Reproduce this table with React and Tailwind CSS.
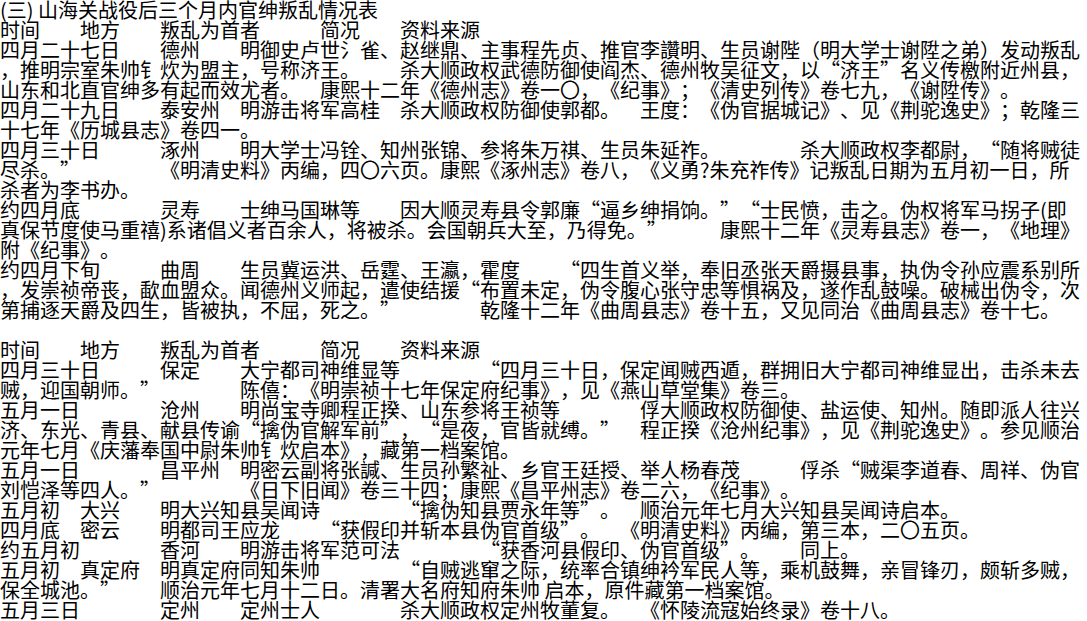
import React from "react";

const cellWidth = (s) =>
  [...s].reduce((a, c) => a + (c.charCodeAt(0) < 0x2000 ? 0.35 : 1), 0);

const build = (segs) => {
  let out = "";
  let pos = 0;
  segs.forEach(([col, text]) => {
    if (col > 0) {
      const n = Math.max(1, col - Math.floor(pos));
      out += "\t".repeat(n);
      pos = col;
    }
    out += text;
    pos += cellWidth(text);
  });
  return out;
};

const header = [
  [0, "时间"],
  [4, "地方"],
  [8, "叛乱为首者"],
  [16, "简况"],
  [20, "资料来源"],
];

const rows = [
  [[0, "(三) 山海关战役后三个月内官绅叛乱情况表"]],
  header,
  [
    [0, "四月二十七日"],
    [8, "德州"],
    [12, "明御史卢世氵雀、赵继鼎、主事程先贞、推官李讚明、生员谢陛（明大学士谢陞之弟）发动叛乱"],
  ],
  [
    [0, "，推明宗室朱帅钅炊为盟主，号称济王。"],
    [20, "杀大顺政权武德防御使阎杰、德州牧吴征文，以“济王”名义传檄附近州县，"],
  ],
  [
    [0, "山东和北直官绅多有起而效尤者。"],
    [16, "康熙十二年《德州志》卷一〇，《纪事》；《清史列传》卷七九，《谢陞传》。"],
  ],
  [
    [0, "四月二十九日"],
    [8, "泰安州"],
    [12, "明游击将军高桂"],
    [20, "杀大顺政权防御使郭都。"],
    [32, "王度：《伪官据城记》、见《荆驼逸史》；乾隆三"],
  ],
  [[0, "十七年《历城县志》卷四一。"]],
  [
    [0, "四月三十日"],
    [8, "涿州"],
    [12, "明大学士冯铨、知州张锦、参将朱万祺、生员朱延祚。"],
    [40, "杀大顺政权李都尉，“随将贼徒"],
  ],
  [
    [0, "尽杀。”"],
    [8, "《明清史料》丙编，四〇六页。康熙《涿州志》卷八，《义勇?朱充祚传》记叛乱日期为五月初一日，所"],
  ],
  [[0, "杀者为李书办。"]],
  [
    [0, "约四月底"],
    [8, "灵寿"],
    [12, "士绅马国琳等"],
    [20, "因大顺灵寿县令郭廉“逼乡绅捐饷。”“士民愤，击之。伪权将军马拐子(即"],
  ],
  [
    [0, "真保节度使马重禧)系诸倡义者百余人，将被杀。会国朝兵大至，乃得免。”"],
    [36, "康熙十二年《灵寿县志》卷一，《地理》"],
  ],
  [[0, "附《纪事》。"]],
  [
    [0, "约四月下旬"],
    [8, "曲周"],
    [12, "生员冀运洪、岳霆、王瀛，霍度"],
    [28, "“四生首义举，奉旧丞张天爵摄县事，执伪令孙应震系别所"],
  ],
  [[0, "，发崇祯帝丧，歃血盟众。闻德州义师起，遣使结援“布置未定，伪令腹心张守忠等惧祸及，遂作乱鼓噪。破械出伪令，次"]],
  [
    [0, "第捕逐天爵及四生，皆被执，不屈，死之。”"],
    [24, "乾隆十二年《曲周县志》卷十五，又见同治《曲周县志》卷十七。"],
  ],
  null,
  header,
  [
    [0, "四月三十日"],
    [8, "保定"],
    [12, "大宁都司神维显等"],
    [24, "“四月三十日，保定闻贼西遁，群拥旧大宁都司神维显出，击杀未去"],
  ],
  [
    [0, "贼，迎国朝师。”"],
    [12, "陈僖：《明崇祯十七年保定府纪事》，见《燕山草堂集》卷三。"],
  ],
  [
    [0, "五月一日"],
    [8, "沧州"],
    [12, "明尚宝寺卿程正揆、山东参将王祯等"],
    [32, "俘大顺政权防御使、盐运使、知州。随即派人往兴"],
  ],
  [
    [0, "济、东光、青县、献县传谕“擒伪官解军前”，“是夜，官皆就缚。”"],
    [32, "程正揆《沧州纪事》，见《荆驼逸史》。参见顺治"],
  ],
  [[0, "元年七月《庆藩奉国中尉朱帅钅炊启本》，藏第一档案馆。"]],
  [
    [0, "五月一日"],
    [8, "昌平州"],
    [12, "明密云副将张諴、生员孙繁祉、乡官王廷授、举人杨春茂"],
    [40, "俘杀“贼渠李道春、周祥、伪官"],
  ],
  [
    [0, "刘恺泽等四人。”"],
    [12, "《日下旧闻》卷三十四；康熙《昌平州志》卷二六，《纪事》。"],
  ],
  [
    [0, "五月初"],
    [4, "大兴"],
    [8, "明大兴知县吴闻诗"],
    [20, "“擒伪知县贾永年等”。"],
    [32, "顺治元年七月大兴知县吴闻诗启本。"],
  ],
  [
    [0, "四月底"],
    [4, "密云"],
    [8, "明都司王应龙"],
    [16, "“获假印并斩本县伪官首级”。"],
    [31, "《明清史料》丙编，第三本，二〇五页。"],
  ],
  [
    [0, "约五月初"],
    [8, "香河"],
    [12, "明游击将军范可法"],
    [24, "“获香河县假印、伪官首级”。"],
    [40, "同上。"],
  ],
  [
    [0, "五月初"],
    [4, "真定府"],
    [8, "明真定府同知朱帅"],
    [20, "“自贼逃窜之际，统率合镇绅衿军民人等，乘机鼓舞，亲冒锋刃，颇斩多贼，"],
  ],
  [
    [0, "保全城池。”"],
    [8, "顺治元年七月十二日。清署大名府知府朱帅 启本，原件藏第一档案馆。"],
  ],
  [
    [0, "五月三日"],
    [8, "定州"],
    [12, "定州士人"],
    [20, "杀大顺政权定州牧董复。"],
    [32, "《怀陵流寇始终录》卷十八。"],
  ],
];

export default function App() {
  return (
    <div className="w-[1087px] h-[621px] overflow-hidden bg-white text-black font-['Noto_Sans_CJK_SC','Noto_Sans_CJK_TC',sans-serif] text-[20px] leading-[20px] [text-spacing-trim:space-all]">
      {rows.map((r, i) =>
        r === null ? (
          <div key={i} className="h-[20px]" />
        ) : (
          <div key={i} className="h-[20px] whitespace-pre [tab-size:20px]">
            {build(r)}
          </div>
        )
      )}
    </div>
  );
}
